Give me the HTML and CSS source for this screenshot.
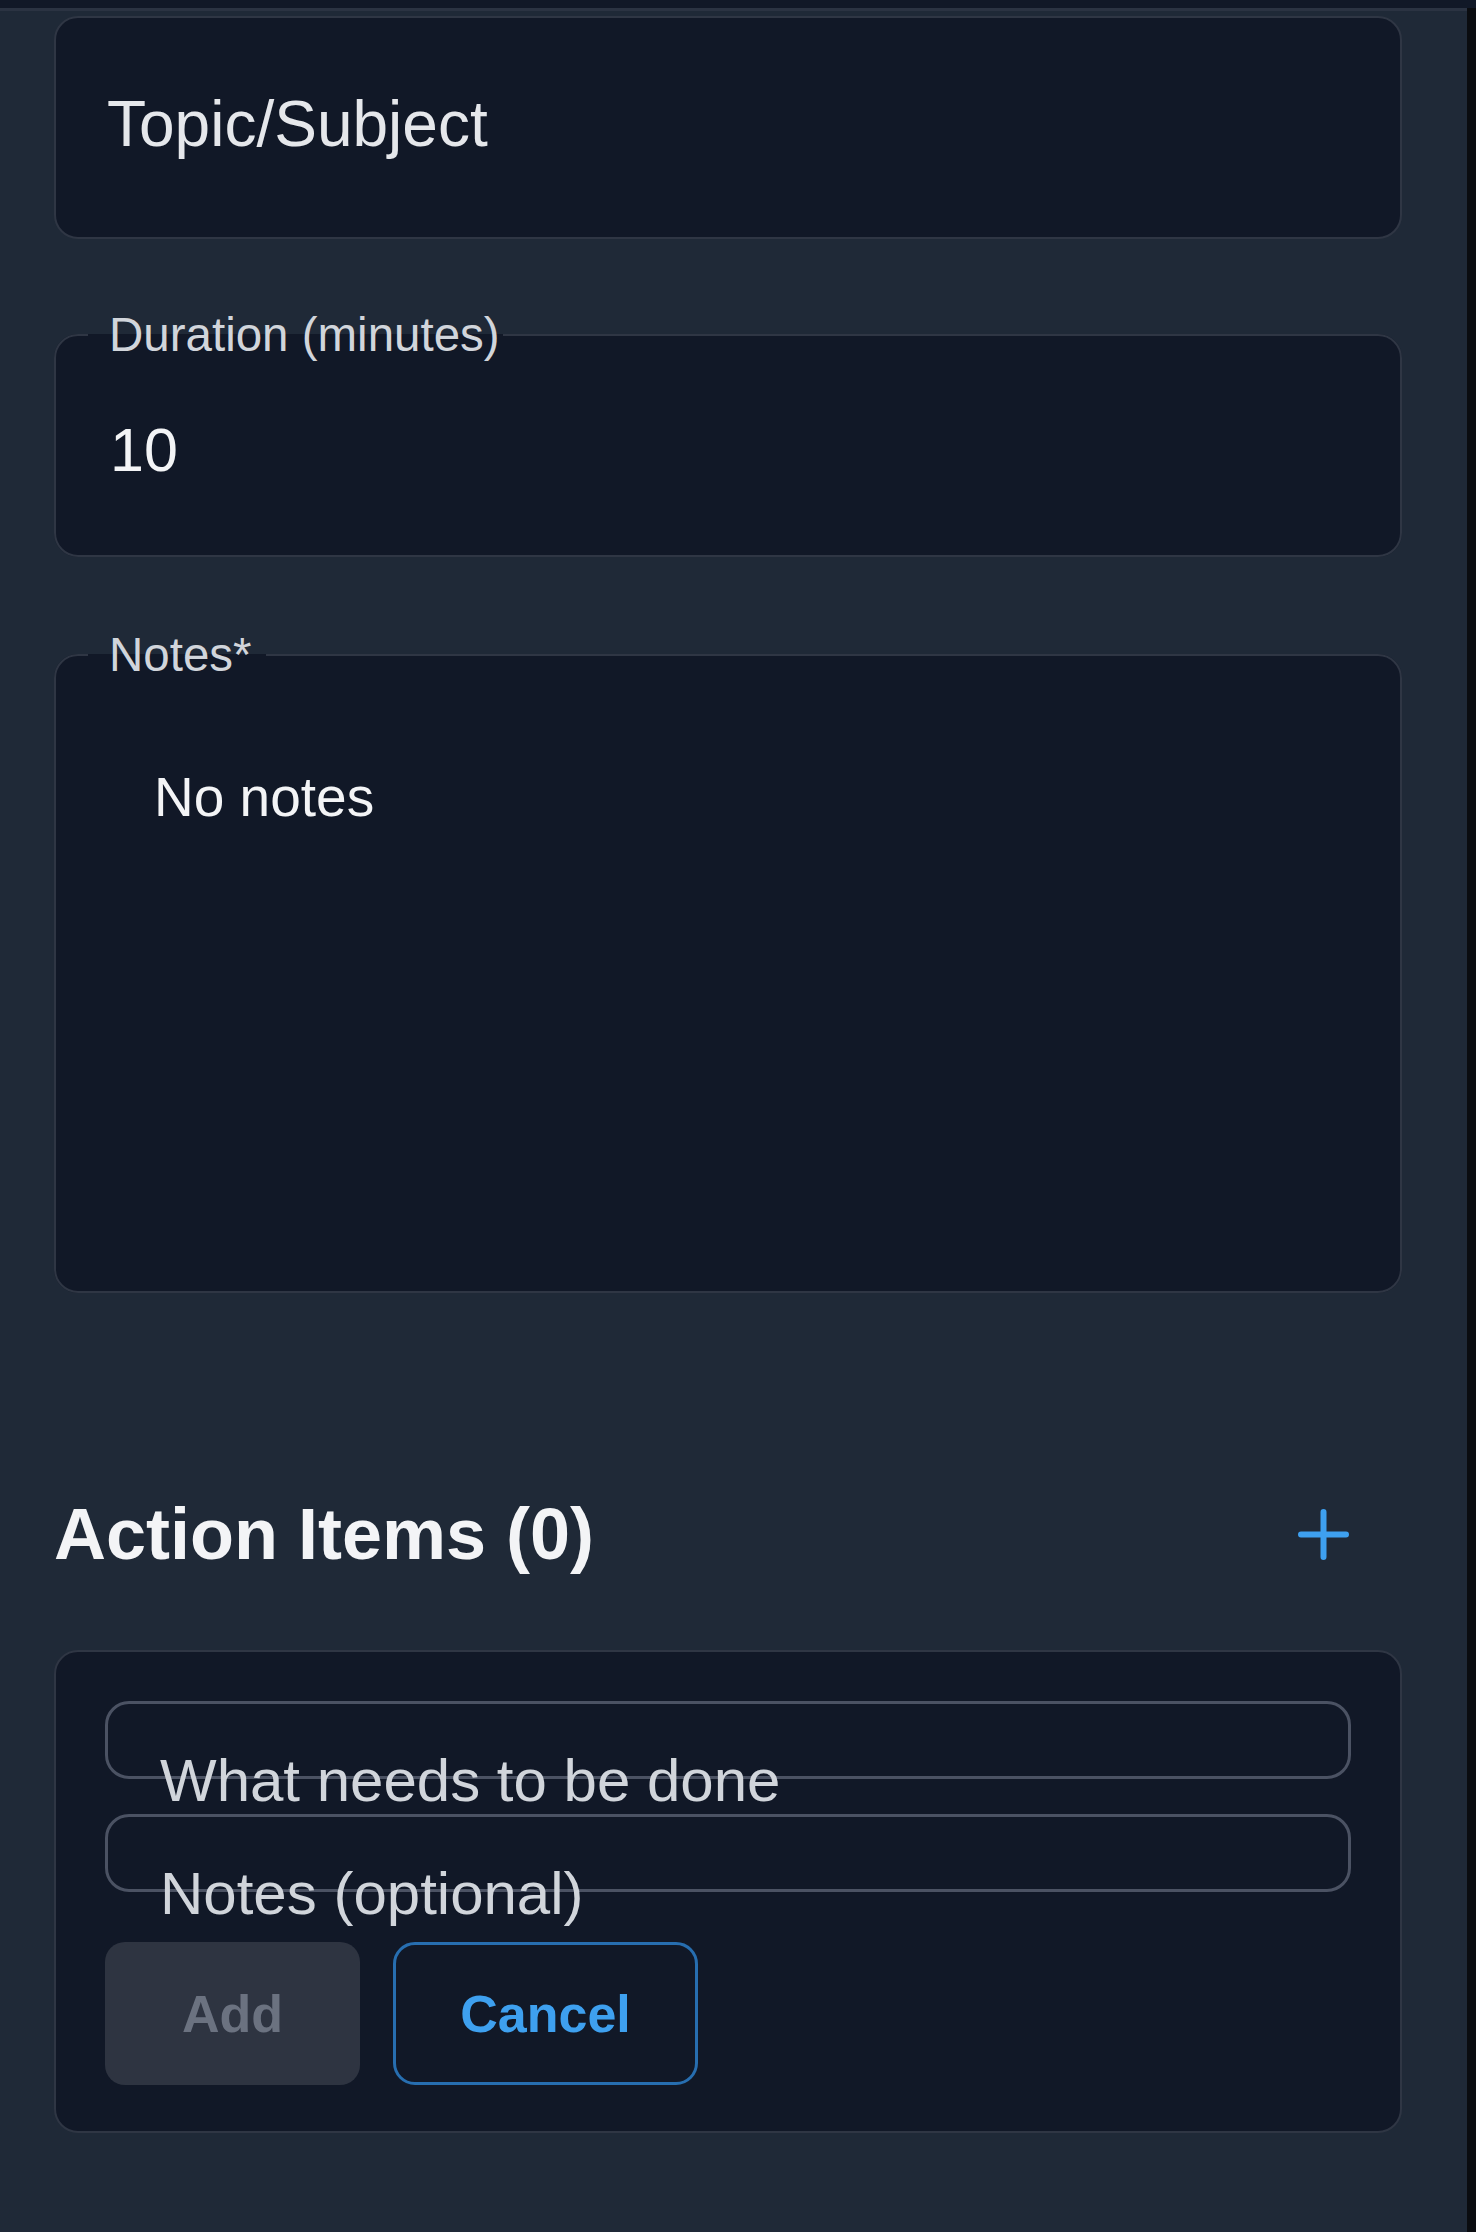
FILE: index.html
```html
<!DOCTYPE html>
<html lang="en">
<head>
<meta charset="utf-8">
<title>Meeting form</title>
<link rel="stylesheet" href="styles.css">
</head>
<body>
<div class="topstrip"></div>
<div class="frame">
  <main class="panel">
    <div class="field field-plain"><span class="value value-topic">Topic/Subject</span></div>

    <fieldset class="field field-set field-dur">
      <legend class="legend">Duration (minutes)</legend>
      <div class="field-body"><span class="value value-num">10</span></div>
    </fieldset>

    <fieldset class="field field-set field-notes">
      <legend class="legend legend-notes">Notes*</legend>
      <div class="notes-body">No notes</div>
    </fieldset>

    <section class="actions">
      <div class="actions-head">
        <h2 class="actions-title">Action Items (0)</h2>
        <button class="icon-btn" type="button" aria-label="Add action item">
          <svg width="51" height="51" viewBox="0 0 51 51"><path d="M3 25.5H48M25.5 3V48" fill="none" stroke="#3ea0ef" stroke-width="6" stroke-linecap="round"/></svg>
        </button>
      </div>
      <div class="action-card">
        <div class="ai-input">What needs to be done</div>
        <div class="ai-input ai-input-second">Notes (optional)</div>
        <div class="btn-row">
          <button class="btn btn-add" type="button">Add</button>
          <button class="btn btn-cancel" type="button">Cancel</button>
        </div>
      </div>
    </section>
  </main>
  <div class="rail"></div>
</div>
</body>
</html>
```

FILE: styles.css
```css
html {
  background: #1f2937;
}
body {
  margin: 0;
  font-family: "Liberation Sans", Arial, sans-serif;
  color: #f3f4f6;
}
.topstrip {
  height: 8px;
  background: #111827;
}
.frame {
  display: flex;
  min-height: 2224px;
}
.panel {
  width: 1467px;
  box-sizing: border-box;
  background: #1f2937;
  border-top: 3px solid #2b3342;
  padding: 5px 65px 0 54px;
}
.rail {
  flex: 1;
  background: #0a0c10;
}
.field {
  background: #111827;
  border: 2px solid #2f3644;
  border-radius: 24px;
  box-sizing: border-box;
}
.field-plain {
  height: 223px;
  display: flex;
  align-items: center;
  padding: 0 0 7px 51px;
}
.value-topic {
  font-size: 64px;
  color: #e5e7eb;
}
.field-set {
  margin: 70px 0 0;
  padding: 0;
  min-width: 0;
}
.field-notes {
  margin-top: 72px;
}
.legend {
  font-size: 47.5px;
  line-height: 52px;
  color: #d1d5db;
  margin: 0 0 8px 32px;
  padding: 0 3px 0 21px;
}
.legend-notes {
  padding-right: 14px;
}
.field-body {
  height: 186px;
  box-sizing: border-box;
  display: flex;
  align-items: center;
  padding: 0 0 24px 54px;
}
.value-num {
  font-size: 61px;
  color: #f3f4f6;
}
.notes-body {
  height: 602px;
  box-sizing: border-box;
  padding: 75px 0 0 98px;
  font-size: 55px;
  line-height: 66px;
  color: #f3f4f6;
}
.actions {
  margin-top: 201px;
}
.actions-head {
  display: flex;
  align-items: center;
  justify-content: space-between;
}
.actions-title {
  margin: 0;
  font-size: 72px;
  line-height: 80px;
  font-weight: 700;
  color: #f3f4f6;
}
.icon-btn {
  background: none;
  border: 0;
  padding: 0;
  margin-right: 53px;
  display: flex;
}
.action-card {
  margin-top: 76px;
  background: #111827;
  border: 2px solid #2f3644;
  border-radius: 24px;
  padding: 49px 49px 46px;
}
.ai-input {
  height: 78px;
  box-sizing: border-box;
  border: 3px solid #4b5263;
  border-radius: 24px;
  padding: 42px 0 0 52px;
  font-size: 60px;
  line-height: 69px;
  color: #d1d5db;
  white-space: nowrap;
}
.ai-input-second {
  margin-top: 35px;
}
.btn-row {
  display: flex;
  gap: 33px;
  margin-top: 50px;
}
.btn {
  height: 143px;
  font-family: "Liberation Sans", Arial, sans-serif;
  font-size: 52px;
  font-weight: 700;
  box-sizing: border-box;
  padding: 0;
}
.btn-add {
  width: 255px;
  background: #2e3441;
  color: #6b7280;
  border: 0;
  border-radius: 20px;
}
.btn-cancel {
  width: 305px;
  background: transparent;
  color: #3ea0ef;
  border: 3px solid #276eb0;
  border-radius: 22px;
}
```
